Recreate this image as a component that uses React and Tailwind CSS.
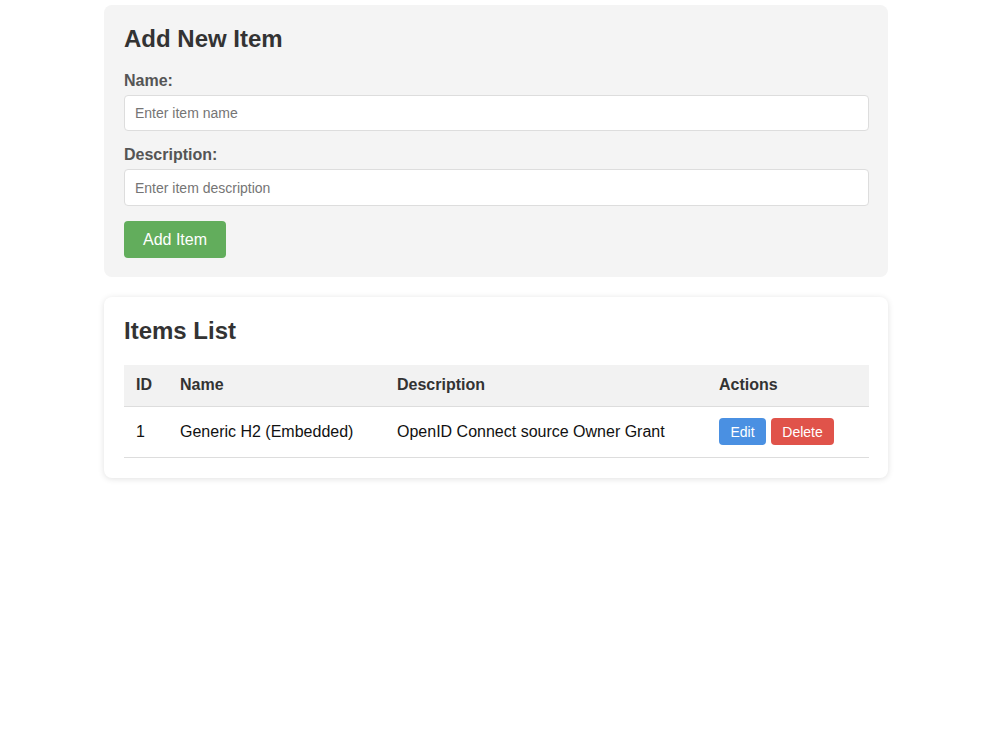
import React, { useState } from 'react';

const ItemsPage = () => {
  const [items, setItems] = useState([
    { id: 1, name: 'Generic H2 (Embedded)', description: 'OpenID Connect source Owner Grant' }
  ]);
  const [name, setName] = useState('');
  const [description, setDescription] = useState('');

  const handleAdd = () => {
    if (!name.trim()) return;
    setItems([...items, { id: items.length + 1, name, description }]);
    setName('');
    setDescription('');
  };

  const handleDelete = (id) => setItems(items.filter(i => i.id !== id));

  return (
    <div className="min-h-[750px] bg-white pl-[104px] pt-[5px] font-['Liberation_Sans',Arial,sans-serif]">
      <div className="w-[784px] flex flex-col gap-5">
        <div className="bg-[#f4f4f4] rounded-lg p-5 pb-[19px]">
          <h2 className="text-2xl leading-7 font-bold text-[#333] mb-[19px]">Add New Item</h2>
          <label className="block text-base leading-[18px] font-bold text-[#555] mb-[5px]">Name:</label>
          <input
            type="text"
            placeholder="Enter item name"
            value={name}
            onChange={e => setName(e.target.value)}
            className="w-[745px] h-9 bg-white border border-[#ddd] rounded px-[10px] text-sm text-[#333] placeholder:text-[#757575] outline-none"
          />
          <label className="block text-base leading-[18px] font-bold text-[#555] mt-[15px] mb-[5px]">Description:</label>
          <input
            type="text"
            placeholder="Enter item description"
            value={description}
            onChange={e => setDescription(e.target.value)}
            className="w-[745px] h-[37px] bg-white border border-[#ddd] rounded px-[10px] text-sm text-[#333] placeholder:text-[#757575] outline-none"
          />
          <button
            onClick={handleAdd}
            className="mt-[15px] h-[37px] w-[102px] bg-[#62ad5c] text-white text-base rounded"
          >
            Add Item
          </button>
        </div>

        <div className="bg-white rounded-lg p-5 shadow-[0_1px_6px_rgba(0,0,0,0.12)]">
          <h2 className="text-2xl leading-7 font-bold text-[#333] mb-5">Items List</h2>
          <table className="w-[745px] border-collapse text-left text-base">
            <thead>
              <tr className="bg-[#f2f2f2] border-b border-[#ddd] text-[#333]">
                <th className="w-[44px] px-3 h-[41px] font-bold">ID</th>
                <th className="w-[217px] px-3 font-bold">Name</th>
                <th className="w-[322px] px-3 font-bold">Description</th>
                <th className="px-3 font-bold">Actions</th>
              </tr>
            </thead>
            <tbody>
              {items.map(item => (
                <tr key={item.id} className="border-b border-[#ddd] text-[#111]">
                  <td className="px-3 h-[51px]">{item.id}</td>
                  <td className="px-3">{item.name}</td>
                  <td className="px-3">{item.description}</td>
                  <td className="px-3">
                    <div className="flex gap-[5px]">
                      <button className="h-[27px] w-[47px] bg-[#4a90e2] text-white text-sm rounded">Edit</button>
                      <button
                        onClick={() => handleDelete(item.id)}
                        className="h-[27px] w-[63px] bg-[#e0534a] text-white text-sm rounded"
                      >
                        Delete
                      </button>
                    </div>
                  </td>
                </tr>
              ))}
            </tbody>
          </table>
        </div>
      </div>
    </div>
  );
};

export default function App() {
  return <ItemsPage />;
}
